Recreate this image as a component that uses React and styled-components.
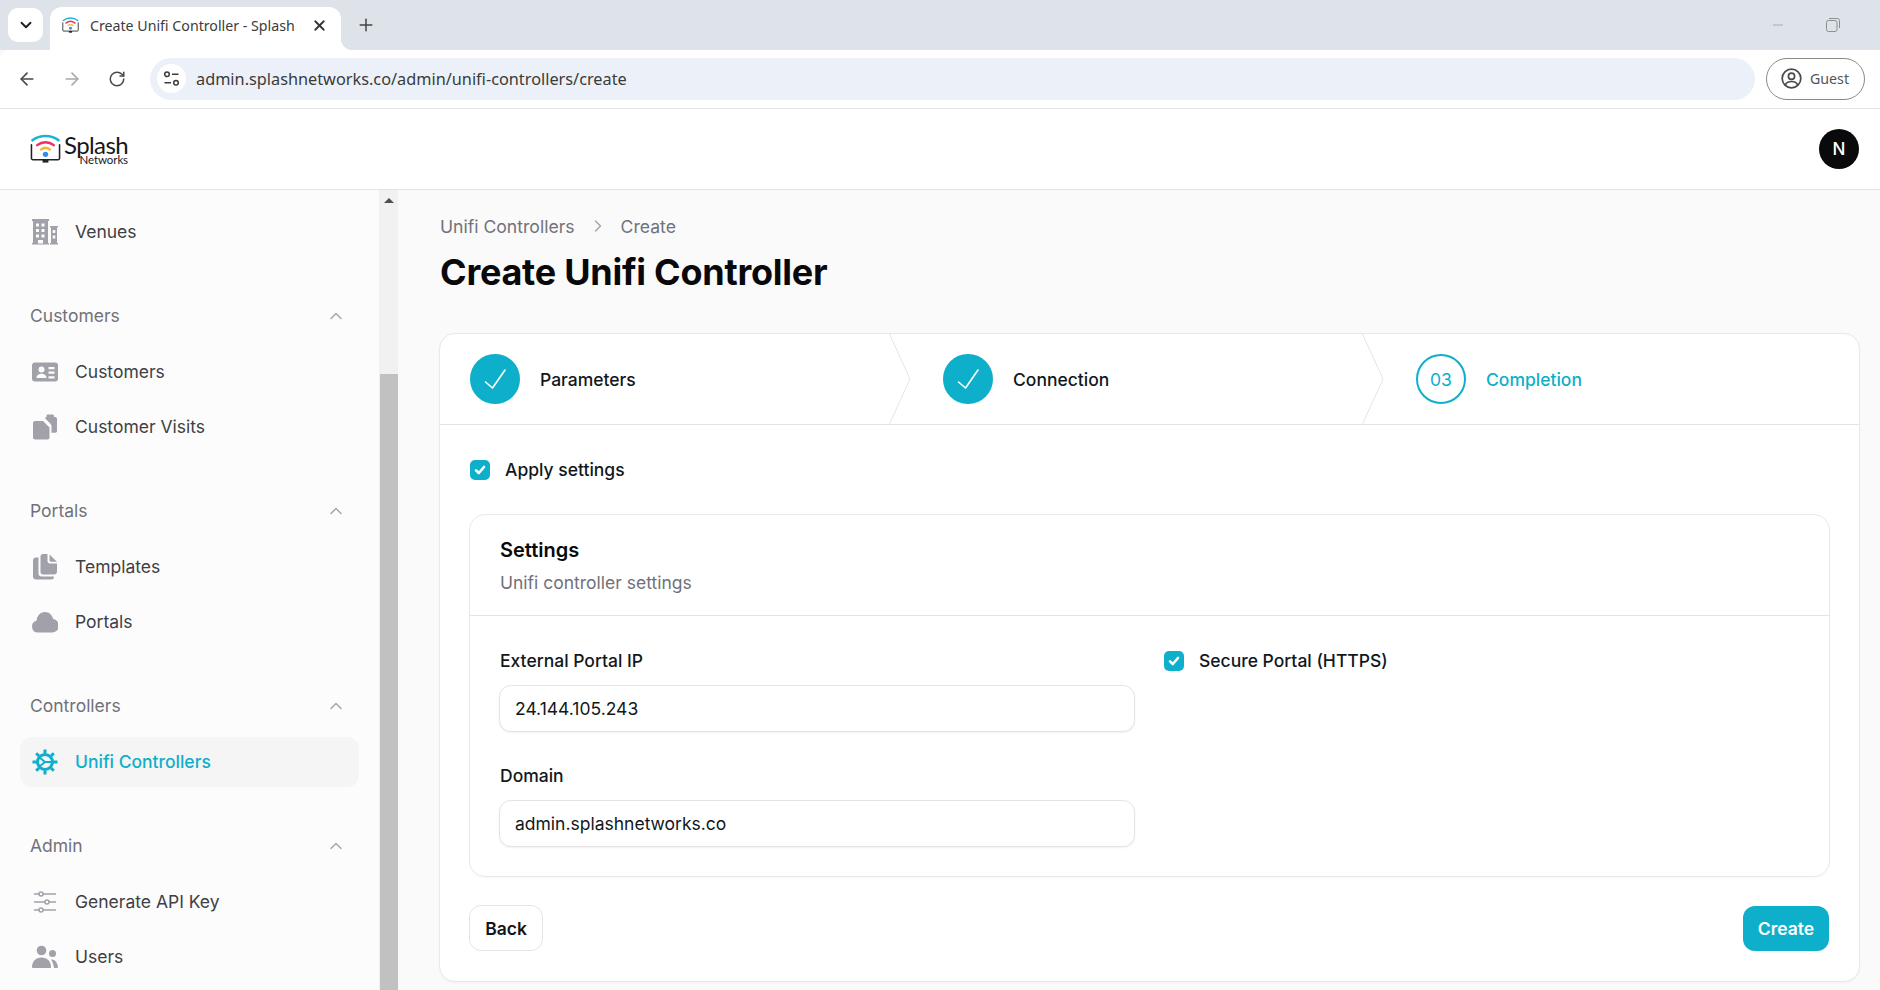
import React from 'react';
import styled, { createGlobalStyle } from 'styled-components';
import {
  ArrowLeft,
  ArrowRight,
  RotateCw,
  Plus,
  X,
  ChevronDown,
  ChevronUp,
  ChevronRight,
  Minus,
} from 'lucide-react';

const TEAL = '#0eafca';
const ICON_GREY = '#a1a1aa';

const GlobalStyle = createGlobalStyle`
  html, body {
    margin: 0;
    padding: 0;
    height: 100%;
    overflow: hidden;
    background: #fafafa;
    font-family: Inter, "Liberation Sans", sans-serif;
  }
  * { box-sizing: border-box; }
`;

const Page = styled.div`
  height: 990px;
  display: flex;
  flex-direction: column;
  overflow: hidden;
`;

/* ---------- browser chrome ---------- */

const TabStrip = styled.div`
  height: 50px;
  background: #dee3ea;
  display: flex;
  align-items: flex-end;
  padding-left: 8px;
  flex: none;
  position: relative;
`;

const TabListButton = styled.div`
  width: 35px;
  height: 34px;
  margin-bottom: 8px;
  background: #fff;
  border-radius: 10px;
  display: flex;
  align-items: center;
  justify-content: center;
  color: #1f1f1f;
`;

const Tab = styled.div`
  width: 291px;
  height: 43px;
  margin-left: 7px;
  background: #fff;
  border-radius: 12px 12px 0 0;
  display: flex;
  align-items: center;
  padding: 0 13px 7px 12px;
  position: relative;
  &::after {
    content: '';
    position: absolute;
    right: -12px;
    bottom: 0;
    width: 12px;
    height: 12px;
    background: radial-gradient(circle at 100% 0, transparent 12px, #fff 12.5px);
  }
`;

const TabTitle = styled.span`
  font-family: "Noto Sans", sans-serif;
  font-size: 14.2px;
  color: #3c3c3c;
  margin-left: 11px;
  flex: 1;
  white-space: nowrap;
`;

const NewTab = styled.div`
  margin: 0 0 8px 15px;
  height: 34px;
  display: flex;
  align-items: center;
  color: #444;
`;

const WindowControls = styled.div`
  margin-left: auto;
  height: 100%;
  padding-right: 40px;
  display: flex;
  align-items: center;
  gap: 40px;
  color: #8b8f94;
`;

const Toolbar = styled.div`
  height: 59px;
  flex: none;
  background: #fff;
  border-bottom: 1px solid #e3e3e3;
  border-radius: 10px 0 0 0;
  display: flex;
  align-items: center;
  padding: 0 15px 1px 17px;
  color: #4a4a4a;
`;

const NavArrows = styled.div`
  display: flex;
  align-items: center;
  gap: 25px;
  width: 133px;
`;

const AddressBar = styled.div`
  flex: 1;
  height: 42px;
  background: #ecf1f9;
  border-radius: 21px;
  display: flex;
  align-items: center;
  padding-left: 7px;
`;

const SiteBadge = styled.div`
  width: 29px;
  height: 29px;
  border-radius: 50%;
  background: #fff;
  display: flex;
  align-items: center;
  justify-content: center;
`;

const UrlText = styled.span`
  font-family: "Noto Sans", sans-serif;
  font-size: 16.3px;
  color: #3a3a3a;
  margin: 1px 0 0 10px;
`;

const GuestButton = styled.div`
  margin-left: 11px;
  width: 99px;
  height: 42px;
  border: 1px solid #8a8a8a;
  border-radius: 21px;
  display: flex;
  align-items: center;
  padding-left: 14px;
  gap: 8px;
  font-family: "Noto Sans", sans-serif;
  font-size: 14.2px;
  color: #555;
`;

/* ---------- app header ---------- */

const AppHeader = styled.header`
  height: 81px;
  flex: none;
  background: #fff;
  border-bottom: 1px solid #e4e4e7;
  display: flex;
  align-items: center;
  justify-content: space-between;
  padding: 0 21px 0 30px;
`;

const Logo = styled.div`
  display: flex;
  align-items: center;
  gap: 3px;
`;

const LogoWords = styled.div`
  display: flex;
  flex-direction: column;
  align-items: flex-end;
  color: #17171a;
`;

const LogoTop = styled.span`
  font-family: Lato, sans-serif;
  font-weight: 400;
  font-size: 24px;
  line-height: 20px;
  letter-spacing: -0.6px;
`;

const LogoBottom = styled.span`
  font-family: Lato, sans-serif;
  font-size: 11.5px;
  line-height: 9px;
  letter-spacing: -0.1px;
`;

const Avatar = styled.div`
  width: 40px;
  height: 40px;
  border-radius: 50%;
  background: #0a0a0c;
  color: #fff;
  display: flex;
  align-items: center;
  justify-content: center;
  font-size: 17px;
  font-weight: 500;
`;

/* ---------- layout ---------- */

const Body = styled.div`
  flex: 1;
  display: flex;
  min-height: 0;
`;

const Sidebar = styled.nav`
  width: 379px;
  flex: none;
  background: #fcfcfc;
  padding: 17px 20px 0;
  overflow: hidden;
`;

const NavGroup = styled.div`
  display: flex;
  flex-direction: column;
  gap: 5px;
  margin-bottom: 39px;
`;

const GroupHeader = styled.div`
  height: 40px;
  margin-bottom: 6px;
  padding: 0 13px 1px 10px;
  display: flex;
  align-items: center;
  justify-content: space-between;
  font-size: 17.5px;
  color: #71717a;
`;

const NavItem = styled.div`
  height: 50px;
  flex: none;
  display: flex;
  align-items: center;
  gap: 17px;
  padding: 0 0 1px 12px;
  border-radius: 12px;
  font-size: 17.5px;
  color: ${props => (props.$active ? TEAL : '#3f3f46')};
  background: ${props => (props.$active ? '#f5f5f5' : 'transparent')};
  font-weight: ${props => (props.$active ? 500 : 400)};
`;

const IconBox = styled.svg`
  width: 26px;
  height: 26px;
  flex: none;
  fill: ${ICON_GREY};
`;

const ScrollTrack = styled.div`
  width: 19px;
  flex: none;
  background: #f1f1f1;
  display: flex;
  flex-direction: column;
  align-items: center;
  padding-left: 1px;
`;

const ScrollArrow = styled.div`
  height: 184px;
  padding-top: 8px;
  &::before {
    content: '';
    display: block;
    width: 0;
    height: 0;
    border-left: 5px solid transparent;
    border-right: 5px solid transparent;
    border-bottom: 5px solid #505050;
  }
`;

const ScrollThumb = styled.div`
  flex: 1;
  width: 100%;
  background: #c1c1c1;
`;

const Main = styled.main`
  flex: 1;
  min-width: 0;
  background: #fafafa;
  padding: 24px 20px 0 41px;
`;

const Breadcrumbs = styled.div`
  display: flex;
  align-items: center;
  gap: 13px;
  height: 24px;
  padding-left: 1px;
  font-size: 17.6px;
  color: #71717a;
`;

const Title = styled.h1`
  margin: 12px 0 39px;
  padding-left: 1px;
  font-size: 36px;
  line-height: 44px;
  font-weight: 700;
  letter-spacing: -0.25px;
  color: #09090b;
`;

const Card = styled.section`
  background: #fff;
  border: 1px solid #e9e9eb;
  border-radius: 16px;
  box-shadow: 0 1px 2px rgba(0, 0, 0, 0.04);
`;

const Stepper = styled.div`
  height: 91px;
  display: grid;
  grid-template-columns: repeat(3, 1fr);
  border-bottom: 1px solid #e4e4e7;
`;

const Step = styled.div`
  position: relative;
  display: flex;
  align-items: center;
  gap: 20px;
  padding-left: 30px;
  font-size: 17.5px;
  font-weight: 500;
  color: ${props => (props.$current ? TEAL : '#11181c')};
`;

const StepCircle = styled.div`
  width: 50px;
  height: 50px;
  border-radius: 50%;
  border: 2px solid ${TEAL};
  background: ${props => (props.$done ? TEAL : '#fff')};
  display: flex;
  align-items: center;
  justify-content: center;
  color: ${TEAL};
  font-size: 17.5px;
  font-weight: 400;
`;

const StepArrow = styled.svg`
  position: absolute;
  top: 0;
  right: 2px;
  width: 22px;
  height: 90px;
  fill: none;
  stroke: #e4e4e7;
`;

const CardBody = styled.div`
  padding: 33px 29px 30px;
`;

const CheckRow = styled.label`
  display: flex;
  align-items: center;
  gap: 15px;
  height: 24px;
  padding-left: 1px;
  font-size: 17.5px;
  font-weight: 500;
  color: #11181c;
`;

const CheckLabel = styled.span`
  margin-top: -1px;
`;

const CheckBox = styled.span`
  width: 20px;
  height: 20px;
  border-radius: 5px;
  background: ${TEAL};
  display: flex;
  align-items: center;
  justify-content: center;
  flex: none;
`;

const SettingsCard = styled.div`
  margin-top: 32px;
  border: 1px solid #e9e9eb;
  border-radius: 16px;
  box-shadow: 0 1px 2px rgba(0, 0, 0, 0.03);
`;

const SettingsHead = styled.div`
  padding: 21px 30px;
  border-bottom: 1px solid #e4e4e7;
`;

const SettingsTitle = styled.h3`
  margin: 0 0 7px;
  font-size: 20px;
  line-height: 28px;
  font-weight: 600;
  color: #09090b;
`;

const SettingsSub = styled.p`
  margin: 0 0 -1px;
  font-size: 17.5px;
  line-height: 24px;
  color: #71717a;
`;

const SettingsGrid = styled.div`
  padding: 33px 29px 29px;
  display: grid;
  grid-template-columns: 636px 1fr;
  column-gap: 28px;
`;

const FieldColumn = styled.div`
  display: flex;
  flex-direction: column;
  gap: 32px;
`;

const Field = styled.div`
  display: flex;
  flex-direction: column;
  gap: 12px;
`;

const FieldLabel = styled.label`
  padding-left: 1px;
  font-size: 17.5px;
  line-height: 24px;
  font-weight: 500;
  color: #11181c;
`;

const TextInput = styled.input`
  height: 47px;
  width: 100%;
  border: 1px solid #e4e4e7;
  border-radius: 12px;
  padding: 0 15px;
  outline: none;
  background: #fff;
  box-shadow: 0 1px 2px rgba(0, 0, 0, 0.06);
  font-family: inherit;
  font-size: 17.5px;
  color: #11181c;
`;

const Actions = styled.div`
  margin-top: 28px;
  display: flex;
  align-items: center;
  justify-content: space-between;
`;

const Button = styled.button`
  height: 46px;
  border-radius: 12px;
  font-family: inherit;
  font-size: 17.5px;
  font-weight: 600;
  padding: 0;
  cursor: pointer;
`;

const BackButton = styled(Button)`
  width: 74px;
  background: #fff;
  border: 1px solid #e4e4e7;
  color: #11181c;
`;

const CreateButton = styled(Button)`
  width: 86px;
  height: 45px;
  margin: 1px 1px 0 0;
  background: ${TEAL};
  border: none;
  color: #fff;
`;

/* ---------- drawings ---------- */

const LogoMark = ({ size = 32 }) => (
  <svg width={size} height={size} viewBox="0 0 32 32" fill="none" strokeLinecap="round">
    <path d="M1.5 11V25a1.5 1.5 0 0 0 1.5 1.5h26a1.5 1.5 0 0 0 1.5-1.5V11" stroke="#222" strokeWidth="1.6" />
    <path d="M13 26.5h6v3h-6z" fill="#222" />
    <path d="M2.5 6.5C10 0.5 22 0.5 29.5 6.5" stroke="#17b5d6" strokeWidth="2.6" />
    <path d="M7.5 11.5C12.5 7.5 19.5 7.5 24.5 11.5" stroke="#ef2f6b" strokeWidth="2.6" />
    <path d="M11.5 16C14.2 14 17.8 14 20.5 16" stroke="#fbb924" strokeWidth="2.6" />
    <circle cx="16" cy="21" r="2.8" fill="#2f8fef" />
  </svg>
);

const Check = ({ size = 14, width = 2.6 }) => (
  <svg width={size} height={size} viewBox="0 0 14 14" fill="none" stroke="#fff" strokeWidth={width} strokeLinecap="round" strokeLinejoin="round">
    <path d="M3 7.4 5.8 10 11 4" />
  </svg>
);

const StepCheck = () => (
  <svg width="28" height="28" viewBox="0 0 28 28" fill="none" stroke="#fff" strokeWidth="1.6" strokeLinecap="round" strokeLinejoin="round">
    <path d="M4.500 17 11.500 23 24 5" />
  </svg>
);

const BuildingIcon = () => (
  <IconBox viewBox="0 0 26 26">
    <path fillRule="evenodd" d="M0 0h17v2h-1v22h1v1.500H0V24h1V2H0V0Zm4 4.500v3h3v-3H4Zm5.500 0v3h3v-3h-3ZM4 10v3h3v-3H4Zm5.500 0v3h3v-3h-3ZM4 15.500v3h3v-3H4Zm5.500 0v3h3v-3h-3ZM6 21v3.500h5V21H6Z" />
    <path fillRule="evenodd" d="M18 7h8v1.500h-1V24h1v1.500h-8V24h1V8.500h-1V7Zm2.700 4v3h2.600v-3h-2.600Zm0 5.500v3h2.600v-3h-2.600Z" />
  </IconBox>
);

const IdCardIcon = () => (
  <IconBox viewBox="0 0 26 26">
    <path fillRule="evenodd" d="M3 3.500h20a3 3 0 0 1 3 3v13a3 3 0 0 1-3 3H3a3 3 0 0 1-3-3v-13a3 3 0 0 1 3-3Zm6.500 4a3 3 0 1 0 0 6 3 3 0 0 0 0-6Zm-5 11.500c0-2.500 2.200-4.300 5-4.300s5 1.800 5 4.300h-10ZM16.500 8v2.200h6V8h-6Zm0 4.600v2.200h6v-2.200h-6Zm0 4.600v2.200h6v-2.200h-6Z" />
  </IconBox>
);

const VisitsIcon = () => (
  <IconBox viewBox="0 0 26 26">
    <path d="M15.500 0.500h5c.8 0 1.500.7 1.500 1.500v1h1.200c1 0 1.800.8 1.800 1.800V17c0 1-.8 1.800-1.800 1.800H19.500v-6.500c0-1-.4-1.800-1-2.500L13 4.200V4.300c.2-.7 1-1.300 2-1.300h-.5V2c0-.8.4-1.500 1-1.500Z" />
    <path d="M3 7h8l6.500 6.500V23.500c0 1.100-.9 2-2 2H3c-1.100 0-2-.9-2-2V9c0-1.100.9-2 2-2Z" />
  </IconBox>
);

const DocsIcon = () => (
  <IconBox viewBox="0 0 26 26">
    <path d="M6.500 3.500v16c0 1.700 1.300 3 3 3h12.500v.500c0 1.500-1.200 2.500-2.500 2.500H4c-1.700 0-3-1.300-3-3V6.500c0-1.700 1.300-3 3-3h2.500Z" />
    <path d="M8.500 2.500c0-1.300 1-2.500 2.500-2.500h4.500v7c0 1.400 1.100 2.500 2.500 2.500h7v8c0 1.700-1.300 3-3 3H11c-1.400 0-2.500-1.200-2.500-2.500V2.500Z" />
    <path d="M17.500.500 25 7.700h-6c-.800 0-1.500-.700-1.500-1.500V.500Z" />
  </IconBox>
);

const CloudIcon = () => (
  <IconBox viewBox="0 0 26 26">
    <path d="M6 23.500A6 6 0 0 1 4.500 11.700C5 7 8 3 13 3c4.200 0 7 2.800 8.200 7A6.800 6.800 0 0 1 20 23.500H6Z" />
  </IconBox>
);

const SlidersIcon = () => (
  <IconBox viewBox="0 0 26 26" style={{ fill: 'none', stroke: ICON_GREY, strokeWidth: 1.5 }}>
    <path d="M2 5h5M11 5h13M2 13h11M17 13h7M2 21h5M11 21h13" />
    <circle cx="9" cy="5" r="2" />
    <circle cx="15" cy="13" r="2" />
    <circle cx="9" cy="21" r="2" />
  </IconBox>
);

const UsersIcon = () => (
  <IconBox viewBox="0 0 26 26">
    <circle cx="9.500" cy="6.500" r="4.800" />
    <path d="M0 23c0-5.500 3.800-9.500 9.500-9.500s9.500 4 9.500 9.500c0 .500-.500 1-1 1H1c-.500 0-1-.500-1-1Z" />
    <circle cx="20.500" cy="9.500" r="3.500" />
    <path d="M19 15.500c3.500-.500 6.500 2.500 7 7.500 0 .500-.500 1-1 1h-3c-.300-3-1.500-6.300-3-8.500Z" />
  </IconBox>
);

const GearIcon = () => (
  <IconBox viewBox="0 0 26 26" style={{ fill: 'none', stroke: TEAL, strokeWidth: 3, strokeLinecap: 'butt' }}>
    <circle cx="13" cy="13" r="7.500" />
    <path d="M13 0.500v4M13 21.500v4M.500 13h4M21.500 13h4M4.200 4.200l2.800 2.800M19 19l2.800 2.800M21.800 4.200 19 7M7 19l-2.800 2.800" strokeWidth="3" />
    <path d="M13 13 7.500 8.500M13 13l-5.500 4.500M13 13h7" strokeWidth="2" />
  </IconBox>
);

const GuestIcon = () => (
  <svg width="21" height="21" viewBox="0 0 21 21" fill="none" stroke="#4a4a4a" strokeWidth="1.700">
    <circle cx="10.500" cy="10.500" r="9.300" />
    <circle cx="10.500" cy="8.200" r="3.100" />
    <path d="M4.300 17c1-2.600 3.300-3.500 6.200-3.500s5.200.900 6.200 3.500" />
  </svg>
);

const SiteIcon = () => (
  <svg width="17" height="17" viewBox="0 0 17 17" fill="none" stroke="#3c3c3c" strokeWidth="1.500">
    <circle cx="4" cy="4.300" r="2.300" />
    <path d="M9 4.300h6.500M1.500 12.700H8" />
    <circle cx="13" cy="12.700" r="2.300" />
  </svg>
);

const RestoreIcon = () => (
  <svg width="14" height="14" viewBox="0 0 14 14" fill="none" stroke="currentColor">
    <rect x="0.500" y="2.500" width="10.500" height="11" rx="2" />
    <path d="M3 .500h8.500a2 2 0 0 1 2 2V10" />
  </svg>
);

/* ---------- data ---------- */

const navGroups = [
  { items: [{ label: 'Venues', icon: <BuildingIcon /> }] },
  {
    title: 'Customers',
    items: [
      { label: 'Customers', icon: <IdCardIcon /> },
      { label: 'Customer Visits', icon: <VisitsIcon /> },
    ],
  },
  {
    title: 'Portals',
    items: [
      { label: 'Templates', icon: <DocsIcon /> },
      { label: 'Portals', icon: <CloudIcon /> },
    ],
  },
  {
    title: 'Controllers',
    items: [{ label: 'Unifi Controllers', icon: <GearIcon />, active: true }],
  },
  {
    title: 'Admin',
    items: [
      { label: 'Generate API Key', icon: <SlidersIcon /> },
      { label: 'Users', icon: <UsersIcon /> },
    ],
  },
];

const StepChevron = () => (
  <StepArrow viewBox="0 0 22 90" preserveAspectRatio="none">
    <path d="M0.500 0 21 45 0.500 90" />
  </StepArrow>
);

const App = () => (
  <Page>
    <GlobalStyle />
    <TabStrip>
      <TabListButton><ChevronDown size={18} strokeWidth={2.5} /></TabListButton>
      <Tab>
        <LogoMark size={17} />
        <TabTitle>Create Unifi Controller - Splash</TabTitle>
        <X size={17} strokeWidth={2.5} color="#333" />
      </Tab>
      <NewTab><Plus size={20} strokeWidth={1.8} /></NewTab>
      <WindowControls>
        <Minus size={16} strokeWidth={1} />
        <RestoreIcon />
      </WindowControls>
    </TabStrip>
    <Toolbar>
      <NavArrows>
        <ArrowLeft size={20} strokeWidth={2} />
        <ArrowRight size={20} strokeWidth={2} color="#a9a9a9" />
        <RotateCw size={18} strokeWidth={2} style={{ marginLeft: 1 }} />
      </NavArrows>
      <AddressBar>
        <SiteBadge><SiteIcon /></SiteBadge>
        <UrlText>admin.splashnetworks.co/admin/unifi-controllers/create</UrlText>
      </AddressBar>
      <GuestButton><GuestIcon />Guest</GuestButton>
    </Toolbar>
    <AppHeader>
      <Logo>
        <LogoMark size={31} />
        <LogoWords>
          <LogoTop>Splash</LogoTop>
          <LogoBottom>Networks</LogoBottom>
        </LogoWords>
      </Logo>
      <Avatar>N</Avatar>
    </AppHeader>
    <Body>
      <Sidebar>
        {navGroups.map((group, i) => (
          <NavGroup key={i}>
            {group.title && (
              <GroupHeader>
                {group.title}
                <ChevronUp size={20} strokeWidth={1.6} color="#a1a1aa" />
              </GroupHeader>
            )}
            {group.items.map(item => (
              <NavItem key={item.label} $active={item.active}>
                {item.icon}
                {item.label}
              </NavItem>
            ))}
          </NavGroup>
        ))}
      </Sidebar>
      <ScrollTrack>
        <ScrollArrow />
        <ScrollThumb />
      </ScrollTrack>
      <Main>
        <Breadcrumbs>
          Unifi Controllers
          <ChevronRight size={20} strokeWidth={1.6} color="#a1a1aa" />
          Create
        </Breadcrumbs>
        <Title>Create Unifi Controller</Title>
        <Card>
          <Stepper>
            <Step>
              <StepCircle $done><StepCheck /></StepCircle>
              Parameters
              <StepChevron />
            </Step>
            <Step>
              <StepCircle $done><StepCheck /></StepCircle>
              Connection
              <StepChevron />
            </Step>
            <Step $current>
              <StepCircle>03</StepCircle>
              Completion
            </Step>
          </Stepper>
          <CardBody>
            <CheckRow>
              <CheckBox><Check /></CheckBox>
              <CheckLabel>Apply settings</CheckLabel>
            </CheckRow>
            <SettingsCard>
              <SettingsHead>
                <SettingsTitle>Settings</SettingsTitle>
                <SettingsSub>Unifi controller settings</SettingsSub>
              </SettingsHead>
              <SettingsGrid>
                <FieldColumn>
                  <Field>
                    <FieldLabel>External Portal IP</FieldLabel>
                    <TextInput readOnly value="24.144.105.243" />
                  </Field>
                  <Field>
                    <FieldLabel>Domain</FieldLabel>
                    <TextInput readOnly value="admin.splashnetworks.co" />
                  </Field>
                </FieldColumn>
                <div>
                  <CheckRow>
                    <CheckBox><Check /></CheckBox>
                    <CheckLabel>Secure Portal (HTTPS)</CheckLabel>
                  </CheckRow>
                </div>
              </SettingsGrid>
            </SettingsCard>
            <Actions>
              <BackButton>Back</BackButton>
              <CreateButton>Create</CreateButton>
            </Actions>
          </CardBody>
        </Card>
      </Main>
    </Body>
  </Page>
);

export default App;
